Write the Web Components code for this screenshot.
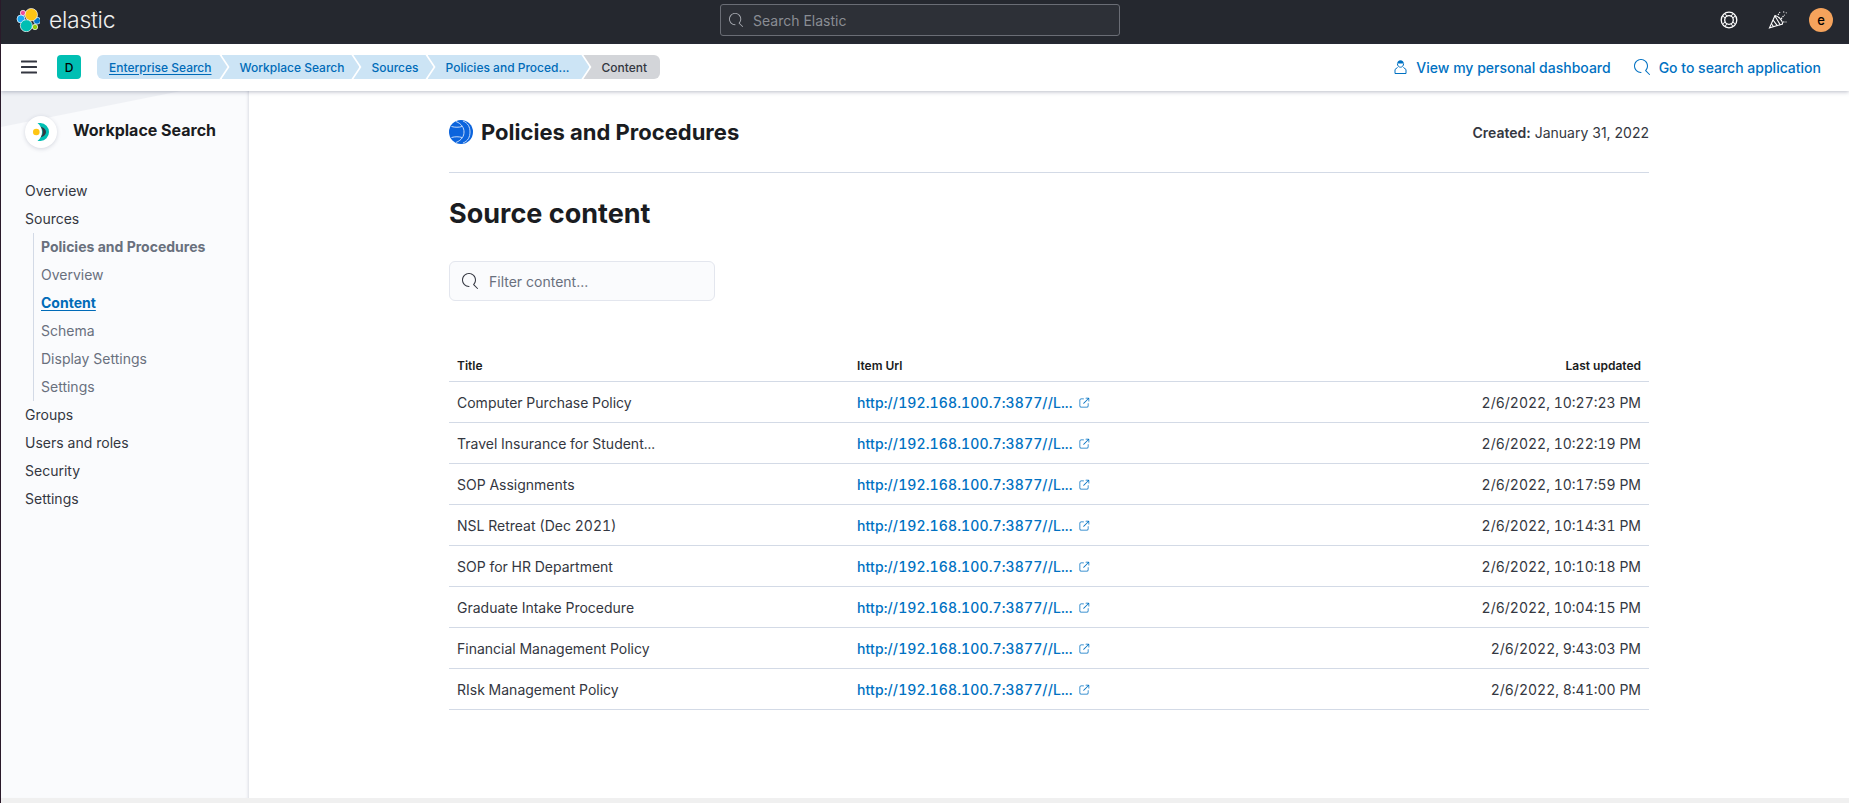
<!DOCTYPE html>
<html>
<head>
<meta charset="utf-8">
<title>Source content</title>
<style>
    html, body { margin: 0; height: 100%; }
    body {
        font-family: Inter, "Liberation Sans", sans-serif;
        color: #343741;
        background: #f0f0f0;
        border-left: 1px solid #2a1a2a;
        box-sizing: border-box;
        height: 803px;
        overflow: hidden;
        display: flex;
        flex-direction: column;
    }
</style>
</head>
<body>
<top-header></top-header>
<nav-bar></nav-bar>
<page-body>
    <side-nav slot="side"></side-nav>
    <source-content slot="main"></source-content>
</page-body>

<script>
const SEARCH_PATH = 'M11.271 11.978l3.872 3.873a.502.502 0 00.708 0 .502.502 0 000-.708l-3.565-3.564c2.38-2.747 2.267-6.923-.342-9.532-2.73-2.73-7.17-2.73-9.898 0-2.728 2.729-2.728 7.17 0 9.9a6.955 6.955 0 004.949 2.05.5.5 0 000-1 5.96 5.96 0 01-4.242-1.757 6.01 6.01 0 010-8.486c2.337-2.34 6.143-2.34 8.484 0a6.01 6.01 0 010 8.486.5.5 0 00.034.738z';
const POPOUT_PATH = 'M13 8.5a.5.5 0 111 0V12a2 2 0 01-2 2H4a2 2 0 01-2-2V4a2 2 0 012-2h3.5a.5.5 0 010 1H4a1 1 0 00-1 1v8a1 1 0 001 1h8a1 1 0 001-1V8.5zM7.88 8.838a.5.5 0 11-.706-.707L13.305 2H10.5a.5.5 0 110-1H14a1 1 0 011 1v3.5a.5.5 0 11-1 0V2.72L7.88 8.838z';

class TopHeader extends HTMLElement {
    constructor() {
        super();
        this.attachShadow({ mode: 'open' });
        this.shadowRoot.innerHTML = `
            <style>
                :host {
                    display: grid;
                    grid-template-columns: 719px 400px 1fr;
                    align-items: center;
                    height: 44px;
                    box-sizing: border-box;
                    padding-bottom: 4px;
                    flex: none;
                    background: #25282f;
                    color: #fff;
                }
                .brand { display: flex; align-items: center; padding-left: 15px; gap: 9px; }
                .word { font-size: 23px; font-weight: 300; letter-spacing: -0.3px; color: #f0f0f0; line-height: 40px; }
                .search {
                    height: 32px;
                    box-sizing: border-box;
                    border: 1px solid #6a6d75;
                    border-radius: 3px;
                    background: #2d3037;
                    display: flex;
                    align-items: center;
                    gap: 10px;
                    padding-left: 8px;
                    font-size: 14px;
                    color: #8a8d94;
                }
                .search svg { fill: #a8abb2; }
                .right { display: flex; justify-content: flex-end; align-items: center; padding-right: 16px; }
                .ico { width: 20px; height: 20px; display: block; }
                .party { margin-left: 29px; }
                .avatar {
                    margin-left: 21px;
                    width: 24px;
                    height: 24px;
                    border-radius: 50%;
                    background: #f5a35c;
                    color: #000;
                    font-size: 13px;
                    font-weight: 500;
                    display: flex;
                    align-items: center;
                    justify-content: center;
                }
            </style>
            <div class="brand">
                <svg width="24" height="24" viewBox="0 0 24 24" stroke="#fff" stroke-width=".7">
                    <circle cx="7" cy="5" r="2.7" fill="#f04e98"/>
                    <circle cx="5" cy="11" r="4" fill="#1ba9f5"/>
                    <circle cx="21" cy="12.7" r="3.500" fill="#0077cc"/>
                    <circle cx="19" cy="19" r="2.7" fill="#93c90e"/>
                    <circle cx="15.300" cy="6.700" r="6.200" fill="#fec514"/>
                    <circle cx="10.300" cy="17.700" r="6" fill="#00bfb3"/>
                </svg>
                <span class="word">elastic</span>
            </div>
            <div class="search">
                <svg width="14" height="14" viewBox="0 0 16 16"><path d="${SEARCH_PATH}"/></svg>
                <span>Search Elastic</span>
            </div>
            <div class="right">
                <svg class="ico" viewBox="0 0 20 20" fill="none" stroke="#fff" stroke-width="1.300">
                    <circle cx="10" cy="10" r="7.800"/>
                    <circle cx="10" cy="10" r="4.300"/>
                    <path d="M3.900 6.300 6.500 8M16.100 6.300 13.500 8M3.900 13.700 6.500 12M16.100 13.700 13.500 12M6.300 3.900 8 6.500M13.700 3.900 12 6.500M6.300 16.100 8 13.500M13.700 16.100 12 13.500" stroke-width="1"/>
                </svg>
                <svg class="ico party" viewBox="0 0 20 20" fill="none" stroke="#fff" stroke-width="1.100">
                    <path d="M7 5.500 1.500 17.800 14.500 14C15 11 10.500 6 7 5.500Z"/>
                    <path d="M5 10 9.500 15.800M3.400 13.500 5.500 16.800M7 6 12 14.500"/>
                    <path d="M10 5 12 2M13 9C15 7 15 5.500 17 5M15 12 18.500 12M15.500 1.500 16 2.500M18 2.500 18.500 3.200" stroke-dasharray="1.500 1"/>
                </svg>
                <div class="avatar">e</div>
            </div>
        `;
    }
}
customElements.define('top-header', TopHeader);

class BreadCrumb extends HTMLElement {
    constructor() {
        super();
        this.attachShadow({ mode: 'open' });
        const first = this.hasAttribute('first');
        const last = this.hasAttribute('last');
        const right = this.getAttribute('pad') || (last ? 13 : 15);
        this.shadowRoot.innerHTML = `
            <style>
                :host {
                    display: flex;
                    align-items: center;
                    height: 24px;
                    box-sizing: border-box;
                    padding: 0 ${right}px 0 ${first ? 12 : 18}px;
                    margin-left: ${first ? 0 : -6}px;
                    background: ${last ? '#d3d5d9' : '#cce4f5'};
                    color: ${last ? '#343741' : '#006bb8'};
                    font-size: 12px;
                    font-weight: 500;
                    white-space: nowrap;
                    border-radius: ${first ? '6px 0 0 6px' : last ? '0 6px 6px 0' : '0'};
                    clip-path: polygon(${first ? '0 0' : '0 0, 8px 50%, 0 100%'}${first ? ', 0 100%' : ''}, ${last ? '100% 100%, 100% 0' : 'calc(100% - 8px) 100%, 100% 50%, calc(100% - 8px) 0'});
                }
                :host([current]) span { text-decoration: underline; text-underline-offset: 2px; }
            </style>
            <span><slot></slot></span>
        `;
    }
}
customElements.define('bread-crumb', BreadCrumb);

class NavBar extends HTMLElement {
    constructor() {
        super();
        this.attachShadow({ mode: 'open' });
        this.shadowRoot.innerHTML = `
            <style>
                :host {
                    display: flex;
                    align-items: center;
                    height: 47px;
                    flex: none;
                    background: #fff;
                    box-shadow: 0 1px 4px rgba(60, 70, 100, .35);
                    position: relative;
                    z-index: 2;
                    padding-bottom: 1px;
                    box-sizing: border-box;
                }
                .burger { margin-left: 20px; display: block; }
                .space {
                    margin-left: 20px;
                    width: 24px;
                    height: 24px;
                    border-radius: 4px;
                    background: #00bfb3;
                    color: #000;
                    font-size: 12px;
                    font-weight: 500;
                    display: flex;
                    align-items: center;
                    justify-content: center;
                }
                .crumbs { display: flex; margin-left: 16px; }
                .links { margin-left: auto; display: flex; padding-right: 28px; gap: 23px; }
                a {
                    display: flex;
                    align-items: center;
                    color: #0071c2;
                    font-size: 14px;
                    font-weight: 500;
                    text-decoration: none;
                    gap: 9px;
                }
                a svg { fill: #0071c2; display: block; }
            </style>
            <svg class="burger" width="16" height="14" viewBox="0 0 16 14" fill="#343741">
                <rect y="0.5" width="16" height="2" rx=".5"/>
                <rect y="6" width="16" height="2" rx=".5"/>
                <rect y="11.5" width="16" height="2" rx=".5"/>
            </svg>
            <div class="space">D</div>
            <div class="crumbs">
                <bread-crumb first current pad="16">Enterprise Search</bread-crumb>
                <bread-crumb>Workplace Search</bread-crumb>
                <bread-crumb>Sources</bread-crumb>
                <bread-crumb pad="20">Policies and Proced...</bread-crumb>
                <bread-crumb last>Content</bread-crumb>
            </div>
            <div class="links">
                <a href="#">
                    <svg width="13" height="16" viewBox="0 0 13 16">
                        <path d="M3.2 4.6C3.2 2.6 4.6 1.2 6.5 1.2S9.8 2.6 9.8 4.6Z"/>
                        <path fill="none" stroke="#0071c2" d="M3.4 4.5c0 2.2 1.3 3.7 3.1 3.7s3.1-1.5 3.1-3.7M3.6 8.4 1 10.5v4h11v-4L9.4 8.4"/>
                    </svg>
                    View my personal dashboard
                </a>
                <a href="#">
                    <svg width="16" height="16" viewBox="0 0 16 16"><path d="${SEARCH_PATH}"/></svg>
                    Go to search application
                </a>
            </div>
        `;
    }
}
customElements.define('nav-bar', NavBar);

class PageBody extends HTMLElement {
    constructor() {
        super();
        this.attachShadow({ mode: 'open' });
        this.shadowRoot.innerHTML = `
            <style>
                :host {
                    display: grid;
                    grid-template-columns: 248px 1fr;
                    height: 707px;
                    flex: none;
                    background: #fff;
                }
            </style>
            <slot name="side"></slot>
            <slot name="main"></slot>
        `;
    }
}
customElements.define('page-body', PageBody);

class SideLink extends HTMLElement {
    constructor() {
        super();
        this.attachShadow({ mode: 'open' });
        this.shadowRoot.innerHTML = `
            <style>
                :host {
                    display: block;
                    height: 28px;
                    line-height: 28px;
                    font-size: 14px;
                    color: #343741;
                    white-space: nowrap;
                }
                :host([sub]) { color: #69707d; }
                :host([head]) { font-weight: 700; }
                :host([active]) { color: #006bb8; font-weight: 700; text-decoration: underline; text-underline-offset: 2px; }
            </style>
            <slot></slot>
        `;
    }
}
customElements.define('side-link', SideLink);

class SideNav extends HTMLElement {
    constructor() {
        super();
        this.attachShadow({ mode: 'open' });
        this.shadowRoot.innerHTML = `
            <style>
                :host {
                    display: block;
                    background: #fafbfd;
                    box-shadow: inset -3px 0 3px -2px rgba(60, 70, 100, .16);
                    position: relative;
                    padding: 0 0 0 24px;
                    z-index: 1;
                }
                .wash {
                    position: absolute;
                    left: 0;
                    top: 0;
                    width: 180px;
                    height: 36px;
                    background: #eff1f5;
                    clip-path: polygon(0 0, 100% 0, 0 100%);
                }
                .logo-row { position: relative; display: flex; align-items: center; padding-top: 25px; gap: 16px; height: 32px; margin-bottom: 29px; }
                .logo {
                    width: 32px;
                    height: 32px;
                    border-radius: 50%;
                    background: #fff;
                    box-shadow: 0 1px 4px rgba(60, 70, 100, .2);
                    display: flex;
                    align-items: center;
                    justify-content: center;
                    flex: none;
                }
                .name { font-size: 16px; font-weight: 700; color: #1a1c21; margin-top: -4px; }
                .sub { border-left: 1px solid #d3dae6; margin-left: 8px; padding-left: 7px; }
            </style>
            <div class="wash"></div>
            <div class="logo-row">
                <div class="logo">
                    <svg width="16" height="18" viewBox="0 0 16 18">
                        <path d="M4.500 0H7.500A8.500 9 0 017.500 18H4.500C7.500 15.500 9 12.500 9 9S7.500 2.500 4.500 0z" fill="#00bfb3"/>
                        <path d="M7.500 3.500C11 4.500 13 6.500 13 9S11 13.500 7.500 14.500C9 12.500 9.700 11 9.700 9S9 5.500 7.500 3.500z" fill="#343741"/>
                        <circle cx="3.300" cy="9" r="3.300" fill="#fec514"/>
                    </svg>
                </div>
                <div class="name">Workplace Search</div>
            </div>
            <side-link>Overview</side-link>
            <side-link>Sources</side-link>
            <div class="sub">
                <side-link sub head>Policies and Procedures</side-link>
                <side-link sub>Overview</side-link>
                <side-link sub active>Content</side-link>
                <side-link sub>Schema</side-link>
                <side-link sub>Display Settings</side-link>
                <side-link sub>Settings</side-link>
            </div>
            <side-link>Groups</side-link>
            <side-link>Users and roles</side-link>
            <side-link>Security</side-link>
            <side-link>Settings</side-link>
        `;
    }
}
customElements.define('side-nav', SideNav);

class ContentRow extends HTMLElement {
    constructor() {
        super();
        this.attachShadow({ mode: 'open' });
        this.shadowRoot.innerHTML = `
            <style>
                :host {
                    display: grid;
                    grid-template-columns: 400px 1fr 1fr;
                    height: 41px;
                    box-sizing: border-box;
                    border-bottom: 1px solid #d3dae6;
                    align-items: center;
                    font-size: 14px;
                    color: #343741;
                    font-feature-settings: "tnum";
                }
                div { padding: 0 8px; white-space: nowrap; }
                .url { display: flex; align-items: center; gap: 5px; }
                a { color: #0071c2; text-decoration: none; font-weight: 500; letter-spacing: .12px; }
                svg { fill: #0071c2; display: block; margin-top: 2px; }
                .when { text-align: right; }
            </style>
            <div>${this.getAttribute('title')}</div>
            <div class="url">
                <a href="#">http://192.168.100.7:3877//L...</a>
                <svg width="12" height="12" viewBox="0 0 16 16"><path d="${POPOUT_PATH}"/></svg>
            </div>
            <div class="when">${this.getAttribute('when')}</div>
        `;
    }
}
customElements.define('content-row', ContentRow);

class SourceContent extends HTMLElement {
    constructor() {
        super();
        this.attachShadow({ mode: 'open' });
        const rows = [
            ['Computer Purchase Policy', '2/6/2022, 10:27:23 PM'],
            ['Travel Insurance for Student...', '2/6/2022, 10:22:19 PM'],
            ['SOP Assignments', '2/6/2022, 10:17:59 PM'],
            ['NSL Retreat (Dec 2021)', '2/6/2022, 10:14:31 PM'],
            ['SOP for HR Department', '2/6/2022, 10:10:18 PM'],
            ['Graduate Intake Procedure', '2/6/2022, 10:04:15 PM'],
            ['Financial Management Policy', '2/6/2022, 9:43:03 PM'],
            ['RIsk Management Policy', '2/6/2022, 8:41:00 PM']
        ];
        this.shadowRoot.innerHTML = `
            <style>
                :host {
                    display: block;
                    width: 1200px;
                    margin-left: 200px;
                    padding-top: 25px;
                }
                .head {
                    display: flex;
                    align-items: center;
                    height: 32px;
                    padding-bottom: 24px;
                    border-bottom: 1px solid #d3dae6;
                }
                .head svg { display: block; margin-right: 8px; }
                .source { font-size: 22px; font-weight: 700; color: #1a1c21; }
                .created { margin-left: auto; font-size: 14px; color: #343741; }
                .created b { font-weight: 600; }
                h1 { margin: 21px 0 0; height: 40px; line-height: 40px; font-size: 27px; font-weight: 700; color: #1a1c21; }
                .filter {
                    margin-top: 27px;
                    width: 266px;
                    height: 40px;
                    box-sizing: border-box;
                    border: 1px solid #e3e6ee;
                    border-radius: 6px;
                    background: #fafbfd;
                    display: flex;
                    align-items: center;
                    gap: 11px;
                    padding-left: 12px;
                    font-size: 14px;
                    color: #69707d;
                }
                .filter svg { fill: #343741; }
                .cols {
                    margin-top: 47px;
                    display: grid;
                    grid-template-columns: 400px 1fr 1fr;
                    align-items: center;
                    height: 34px;
                    box-sizing: border-box;
                    padding-top: 2px;
                    border-bottom: 1px solid #d3dae6;
                    font-size: 12px;
                    font-weight: 600;
                    color: #1a1c21;
                }
                .cols div { padding: 0 8px; }
                .cols div:last-child { text-align: right; }
            </style>
            <div class="head">
                <svg width="24" height="24" viewBox="0 0 24 24">
                    <circle cx="12" cy="12" r="12" fill="#0b64dd"/>
                    <g fill="none" stroke="#d6e5fa" stroke-width=".9">
                        <path d="M7 1.500C13 4 15 8 15 12S13 20 7 22.500"/>
                        <path d="M14 1C19 3 21 7 21 12S19 21 14 23"/>
                        <path d="M2.500 6.500C6 7.500 10 7.500 13 6.500M2.500 17.500C6 16.500 10 16.500 13 17.500"/>
                    </g>
                </svg>
                <div class="source">Policies and Procedures</div>
                <div class="created"><b>Created:</b> January 31, 2022</div>
            </div>
            <h1>Source content</h1>
            <div class="filter">
                <svg width="16" height="16" viewBox="0 0 16 16"><path d="${SEARCH_PATH}"/></svg>
                <span>Filter content...</span>
            </div>
            <div class="cols"><div>Title</div><div>Item Url</div><div>Last updated</div></div>
            ${rows.map(r => `<content-row title="${r[0]}" when="${r[1]}"></content-row>`).join('')}
        `;
    }
}
customElements.define('source-content', SourceContent);
</script>
</body>
</html>
